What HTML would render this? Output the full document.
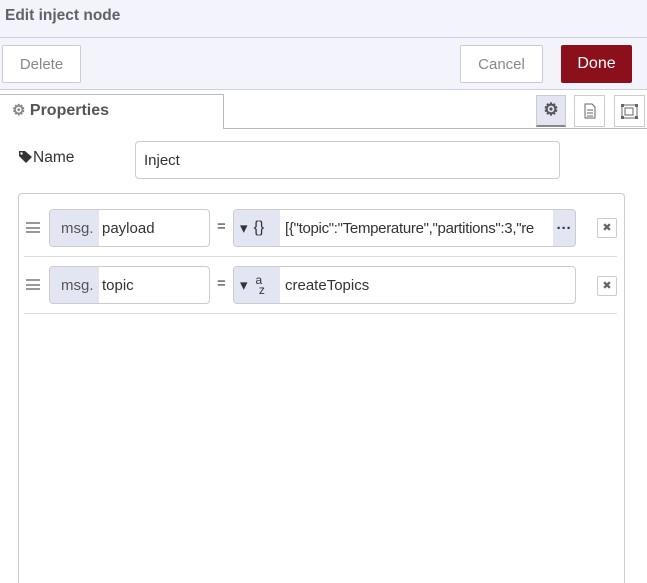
<!DOCTYPE html>
<html><head><style>
*{box-sizing:border-box;margin:0;padding:0}
html,body{width:647px;height:583px;overflow:hidden}
body{background:#fff;font-family:"Liberation Sans",sans-serif;font-size:14px;color:#333;position:relative}
.a{position:absolute}
.btn{position:absolute;border:1px solid #ccc;background:#fff;color:#888;font-size:15px;display:flex;align-items:center;justify-content:center;border-radius:2px}
.inp{position:absolute;border:1px solid #ccc;border-radius:4px;background:#fff;display:flex;align-items:center;overflow:hidden;font-size:15px;color:#333}
.pre{background:#e3e5f3;height:100%;display:flex;align-items:center;color:#555}
.ham{position:absolute;width:14px;height:11px;border-top:2px solid #999;border-bottom:2px solid #999}
.ham:after{content:"";position:absolute;left:0;right:0;top:2.5px;height:2px;background:#999}
</style></head><body>
<div class="a" style="left:0;top:0;width:647px;height:90px;background:#f3f3fb;border-bottom:1px solid #d0d0dd"></div>
<div class="a" style="left:0;top:37px;width:647px;height:1px;background:#d0d0dd"></div>
<div class="a" style="left:5px;top:7px;font-size:15.5px;font-weight:bold;color:#5f6366">Edit inject node</div>
<div class="btn" style="left:2px;top:45px;width:79px;height:38px">Delete</div>
<div class="btn" style="left:460px;top:45px;width:83px;height:38px">Cancel</div>
<div class="btn" style="left:561px;top:45px;width:71px;height:38px;background:#8c101c;border-color:#8c101c;color:#fff;font-size:16px">Done</div>
<div class="a" style="left:0;top:128px;width:647px;height:1px;background:#bbb"></div>
<div class="a" style="left:0;top:94px;width:224px;height:35px;background:#fff;border:1px solid #bbb;border-left:none;border-bottom:none"></div>
<div class="a" style="left:12px;top:101px;font-size:16px;font-weight:bold;color:#555"><span style="color:#888;font-size:15px">⚙</span> Properties</div>
<div class="a" style="left:536px;top:95px;width:30px;height:32px;background:#e3e5f3;border:1px solid #ccc;border-bottom:2px solid #888;text-align:center;line-height:28px;color:#555;font-size:17px;font-weight:bold">⚙</div>
<div class="a" style="left:574px;top:95px;width:31px;height:32px;border:1px solid #ccc;background:#fff">
<svg width="29" height="30"><path d="M10 8h7l3 3v11h-10z M12 14h6M12 17h6M12 20h6" fill="none" stroke="#666" stroke-width="1"/></svg></div>
<div class="a" style="left:614px;top:95px;width:31px;height:32px;border:1px solid #ccc;background:#fff">
<svg width="29" height="30"><rect x="7" y="9" width="15" height="13" fill="none" stroke="#666"/><rect x="10" y="12" width="8" height="7" fill="none" stroke="#666"/><rect x="6" y="8" width="3" height="3" fill="#666"/><rect x="20" y="8" width="3" height="3" fill="#666"/><rect x="6" y="20" width="3" height="3" fill="#666"/><rect x="20" y="20" width="3" height="3" fill="#666"/></svg></div>
<div class="a" style="left:18px;top:149px;font-size:15.5px;color:#333">
<svg width="15" height="13" style="vertical-align:-1px"><path d="M1 1h6l7 6-6 6-7-7z" fill="#333"/><circle cx="3.5" cy="3.5" r="1.2" fill="#fff"/></svg>Name</div>
<div class="inp" style="left:135px;top:141px;width:425px;height:38px;padding-left:8px">Inject</div>
<div class="a" style="left:18px;top:193px;width:607px;height:390px;border:1px solid #ccc;border-bottom:none;border-radius:4px 4px 0 0"></div>
<div class="a" style="left:24px;top:256px;width:593px;height:1px;background:#ddd"></div>
<div class="a" style="left:24px;top:313px;width:593px;height:1px;background:#ddd"></div>

<div class="ham" style="left:26px;top:222px"></div>
<div class="inp" style="left:49px;top:209px;width:161px;height:38px"><div class="pre" style="width:49px;padding-left:11px">msg.</div><span style="padding-left:3px">payload</span></div>
<div class="a" style="left:217px;top:218px;font-size:15px">=</div>
<div class="inp" style="left:233px;top:209px;width:343px;height:38px"><div class="pre" style="width:46px;padding-left:6px;color:#333">▾ <span style="margin-left:6px;font-size:16px">{}</span></div><span style="padding-left:5px;white-space:nowrap;flex:1;overflow:hidden;letter-spacing:-0.3px">[{"topic":"Temperature","partitions":3,"re</span><div class="pre" style="width:22px;justify-content:center;font-weight:bold;color:#333">···</div></div>
<div class="a" style="left:597px;top:218px;width:20px;height:20px;border:1px solid #ccc;border-radius:2px;text-align:center;font-size:11px;line-height:18px;color:#666">✖</div>

<div class="ham" style="left:26px;top:279px"></div>
<div class="inp" style="left:49px;top:266px;width:161px;height:38px"><div class="pre" style="width:49px;padding-left:11px">msg.</div><span style="padding-left:3px">topic</span></div>
<div class="a" style="left:217px;top:275px;font-size:15px">=</div>
<div class="inp" style="left:233px;top:266px;width:343px;height:38px"><div class="pre" style="width:46px;padding-left:6px;color:#333">▾ <span style="margin-left:8px;font-size:12px;line-height:10px;display:inline-block">a<br>&nbsp;z</span></div><span style="padding-left:5px">createTopics</span></div>
<div class="a" style="left:597px;top:276px;width:20px;height:20px;border:1px solid #ccc;border-radius:2px;text-align:center;font-size:11px;line-height:18px;color:#666">✖</div>
</body></html>
